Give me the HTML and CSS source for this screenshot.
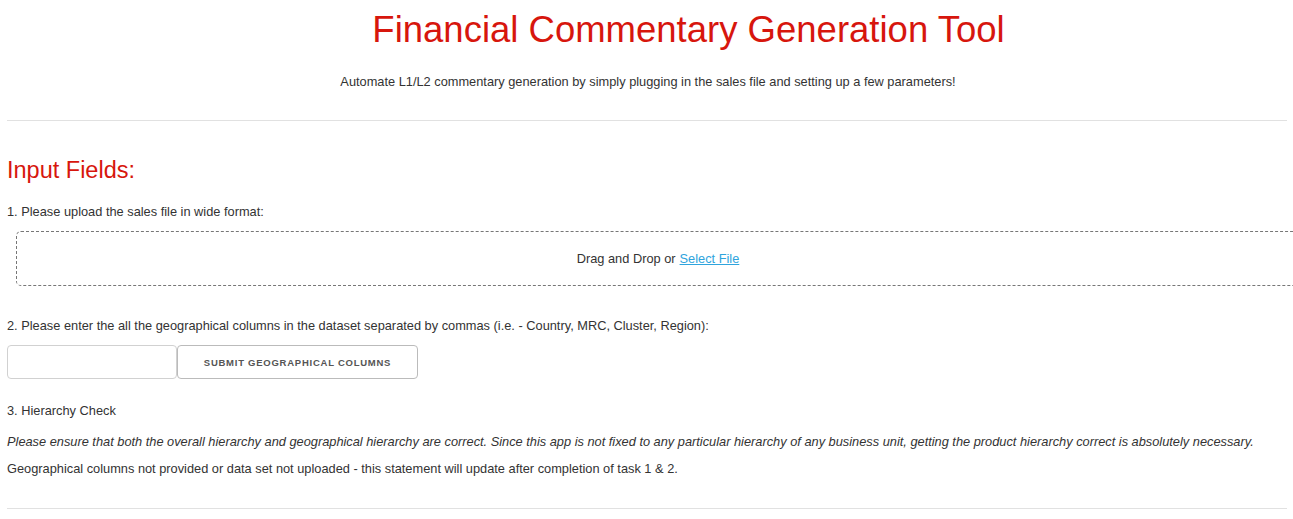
FILE: index.html
```html
<!DOCTYPE html>
<html>
<head>
<meta charset="utf-8">
<link rel="stylesheet" href="styles.css">
</head>
<body>
<div class="page">
  <header class="hero">
    <h1 class="title">Financial Commentary Generation Tool</h1>
    <p class="subtitle">Automate L1/L2 commentary generation by simply plugging in the sales file and setting up a few parameters!</p>
  </header>
  <hr class="rule">
  <section class="inputs">
    <h2 class="heading">Input Fields:</h2>
    <p class="label">1. Please upload the sales file in wide format:</p>
    <div class="upload">Drag and Drop or <a class="link" href="#">Select File</a></div>
    <p class="label label-2">2. Please enter the all the geographical columns in the dataset separated by commas (i.e. - Country, MRC, Cluster, Region):</p>
    <div class="geo-row">
      <input class="geo-input" type="text">
      <button class="geo-btn">Submit Geographical Columns</button>
    </div>
    <p class="label label-3">3. Hierarchy Check</p>
    <p class="note">Please ensure that both the overall hierarchy and geographical hierarchy are correct. Since this app is not fixed to any particular hierarchy of any business unit, getting the product hierarchy correct is absolutely necessary.</p>
    <p class="status">Geographical columns not provided or data set not uploaded - this statement will update after completion of task 1 &amp; 2.</p>
  </section>
  <hr class="rule rule-bottom">
</div>
</body>
</html>
```

FILE: styles.css
```css
html, body {
  margin: 0;
  padding: 0;
  background: #ffffff;
}
body {
  font-family: "Liberation Sans", Arial, sans-serif;
  color: #333333;
  overflow: hidden;
}
.page {
  padding: 0 6px 0 7px;
}
.hero {
  text-align: center;
  padding-left: 2px;
}
.title {
  margin: 0;
  padding-top: 9px;
  padding-left: 81px;
  font-size: 36.5px;
  line-height: 42px;
  font-weight: normal;
  color: #d7160d;
}
.subtitle {
  margin: 23px 0 0 0;
  font-size: 12.8px;
  line-height: 16px;
}
.rule {
  border: 0;
  border-top: 1px solid #e1e1e1;
  margin: 30px 0 0 0;
}
.heading {
  margin: 34px 0 0 0;
  font-size: 23.5px;
  line-height: 30px;
  font-weight: normal;
  color: #d7160d;
}
.label {
  margin: 19px 0 0 0;
  font-size: 12.8px;
  line-height: 16px;
}
.upload {
  margin: 11px 0 0 9px;
  width: 1284px;
  height: 55px;
  box-sizing: border-box;
  border: 1px dashed #777777;
  border-radius: 5px;
  display: flex;
  align-items: center;
  justify-content: center;
  font-size: 12.8px;
  color: #333333;
}
.link {
  color: #2fa4dd;
  text-decoration: underline;
  margin-left: 4px;
}
.label-2 {
  margin-top: 32px;
}
.geo-row {
  display: flex;
  margin-top: 11px;
}
.geo-input {
  width: 170px;
  height: 34px;
  box-sizing: border-box;
  border: 1px solid #d1d1d1;
  border-radius: 4px;
  margin: 0;
  padding: 6px 10px;
  background: #fff;
}
.geo-btn {
  width: 241px;
  height: 34px;
  box-sizing: border-box;
  border: 1px solid #bbbbbb;
  border-radius: 4px;
  background: transparent;
  margin: 0;
  padding: 0;
  white-space: nowrap;
  font-family: "Liberation Sans", Arial, sans-serif;
  font-size: 9.5px;
  font-weight: bold;
  letter-spacing: 0.75px;
  text-transform: uppercase;
  color: #555555;
}
.label-3 {
  margin-top: 24px;
}
.note {
  margin: 15px 0 0 0;
  font-size: 12.8px;
  line-height: 16px;
  font-style: italic;
  white-space: nowrap;
}
.status {
  margin: 11px 0 0 0;
  font-size: 12.8px;
  line-height: 16px;
}
.rule-bottom {
  margin-top: 31px;
}
```
